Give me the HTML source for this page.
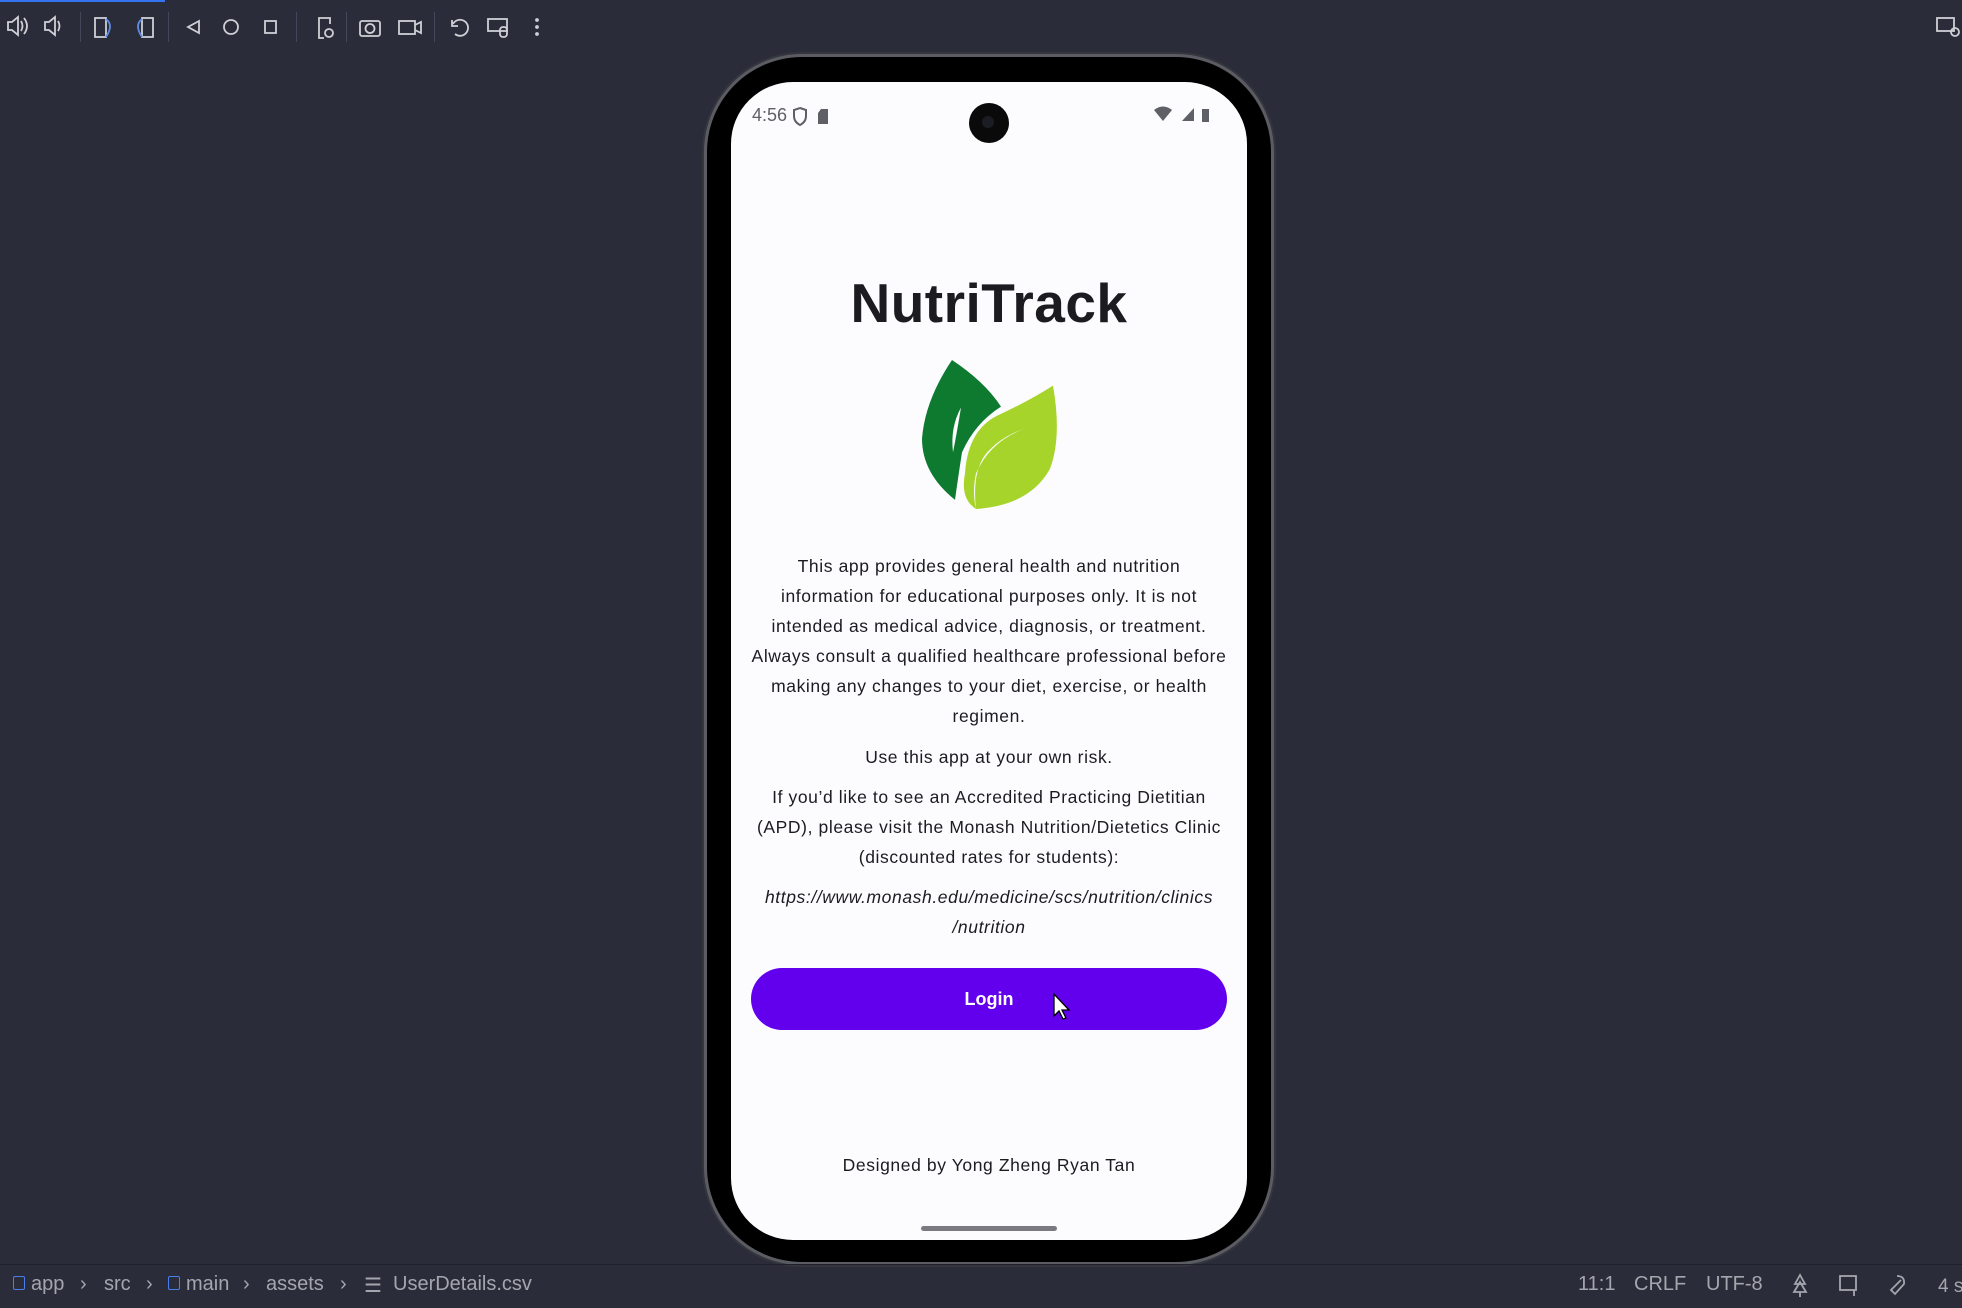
<!DOCTYPE html>
<html><head><meta charset="utf-8"><style>
html,body{margin:0;padding:0}
body{width:1962px;height:1308px;background:#2b2c39;position:relative;overflow:hidden;font-family:"Liberation Sans",sans-serif}
.abs{position:absolute}
.sep{position:absolute;top:12px;width:1px;height:30px;background:#44465a}
.t{position:absolute;left:731px;width:516px;text-align:center;color:#1c1b1f;font-size:17.5px;letter-spacing:0.6px;line-height:30px}
.b{position:absolute;top:1273px;font-size:20px;color:#a4a6ae;white-space:nowrap}
.ic{display:inline-block;width:10px;height:12px;border:1.5px solid #4a7ee8;border-radius:2px}
</style></head><body>
<div class="abs" style="left:0;top:0;width:165px;height:2px;background:#3574f0"></div>
<svg class="abs" style="left:0;top:0" width="560" height="56" fill="none" stroke="#ced0d6" stroke-width="1.8">
 <path d="M8 22h4l6-5v18l-6-5H8z"/><path d="M21 21q3 5 0 10M24 18q6 8 0 16"/>
 <path d="M45 22h4l6-5v18l-6-5h-4z"/><path d="M58 21q3 5 0 10"/>
 <rect x="95" y="18" width="11" height="19"/><path d="M106 19q8 6 0 18" stroke="#5a8be0"/>
 <rect x="142" y="18" width="11" height="19"/><path d="M142 19q-8 6 0 18" stroke="#5a8be0"/>
 <path d="M199 21l-11 6 11 6z"/><circle cx="231" cy="27" r="7"/><rect x="265" y="21" width="11" height="12"/>
 <path d="M324 38h-5V18h11v6"/><circle cx="329" cy="33" r="4"/>
 <rect x="360" y="21" width="20" height="15" rx="2"/><circle cx="370" cy="28.5" r="4.5"/>
 <rect x="399" y="21" width="16" height="13"/><path d="M415 25l6-3v11l-6-3"/>
 <path d="M452 20v6h6"/><path d="M453 24a8 8 0 1 1 2 10"/>
 <rect x="488" y="19" width="19" height="12"/><rect x="500" y="27" width="7" height="10" rx="3"/>
 <circle cx="537" cy="20" r="1" fill="#ced0d6"/><circle cx="537" cy="27" r="1" fill="#ced0d6"/><circle cx="537" cy="34" r="1" fill="#ced0d6"/>
</svg>
<div class="sep" style="left:80px"></div><div class="sep" style="left:168px"></div><div class="sep" style="left:296px"></div><div class="sep" style="left:346px"></div><div class="sep" style="left:434px"></div>
<svg class="abs" style="left:1935px;top:16px" width="27" height="22" fill="none" stroke="#ced0d6" stroke-width="1.8"><rect x="2" y="2" width="17" height="13"/><circle cx="20" cy="16" r="4"/></svg>

<!-- phone -->
<div class="abs" style="left:707px;top:57px;width:564px;height:1205px;border-radius:95px;background:#000;box-shadow:0 0 0 3px #5b5c63,0 0 0 5px #34353d"></div>
<div class="abs" style="left:731px;top:82px;width:516px;height:1158px;border-radius:62px;background:#fcfcff"></div>
<div class="abs" style="left:969px;top:103px;width:40px;height:40px;border-radius:50%;background:#0a0a0a"></div>
<div class="abs" style="left:982px;top:116px;width:12px;height:12px;border-radius:50%;background:#1c1d24"></div>
<div class="abs" style="left:752px;top:105px;font-size:18px;color:#5f5f66">4:56</div>
<svg class="abs" style="left:792px;top:106px" width="50" height="22"><path d="M8 2l6 2v6q0 6-6 9q-6-3-6-9V4z" fill="none" stroke="#5f5f66" stroke-width="2"/><path d="M29 3h7v15h-10V7z" fill="#5f5f66"/></svg>
<svg class="abs" style="left:1154px;top:106px" width="60" height="20" fill="#5f5f66"><path d="M0 4q9-7 18 0l-9 11z"/><path d="M28 15h12V2z"/><rect x="48" y="3" width="7" height="13"/></svg>

<div class="abs" style="left:731px;width:516px;top:271px;text-align:center;font-size:55px;font-weight:bold;color:#1c1b1f;letter-spacing:0.5px">NutriTrack</div>
<svg class="abs" style="left:0;top:0" width="1962" height="1308">
<g transform="translate(0,360) scale(1,0.914) translate(0,-396)">
 <path d="M952 396Q985 420 1001 447Q975 465 962 497Q958 525 955 549Q922 520 922 482Q925 440 952 396Z" fill="#0d7a30"/>
 <path d="M961 448Q950 470 953 497Q957 475 961 448Z" fill="#fcfcff"/>
 <path d="M1053 424Q1062 480 1050 515Q1030 555 976 559Q960 548 965 520Q968 470 1001 455Q1030 440 1053 424Z" fill="#a6d42a"/>
 <path d="M1025 471Q990 485 976 520Q972 540 976 559Q972 520 985 500Q1000 480 1025 471Z" fill="#fcfcff"/>
 <path d="M1001 448Q970 470 963 505Q958 530 962 550Q955 505 975 475Q985 460 1001 448Z" fill="#fcfcff"/>
</g>
</svg>

<div class="t" style="top:551px">This app provides general health and nutrition<br>information for educational purposes only. It is not<br>intended as medical advice, diagnosis, or treatment.<br>Always consult a qualified healthcare professional before<br>making any changes to your diet, exercise, or health<br>regimen.</div>
<div class="t" style="top:742px">Use this app at your own risk.</div>
<div class="t" style="top:782px">If you’d like to see an Accredited Practicing Dietitian<br>(APD), please visit the Monash Nutrition/Dietetics Clinic<br>(discounted rates for students):</div>
<div class="t" style="top:882px;font-style:italic">https://www.monash.edu/medicine/scs/nutrition/clinics<br>/nutrition</div>

<div class="abs" style="left:751px;top:968px;width:476px;height:62px;border-radius:31px;background:#6200ee;color:#fff;font-size:18px;font-weight:bold;text-align:center;line-height:62px">Login</div>
<svg class="abs" style="left:1052px;top:992px" width="22" height="30"><path d="M2 2v22l5-5 4 8 3-1-4-8h7z" fill="#fff" stroke="#000" stroke-width="1.3"/></svg>

<div class="t" style="top:1150px">Designed by Yong Zheng Ryan Tan</div>
<div class="abs" style="left:921px;top:1226px;width:136px;height:5px;border-radius:3px;background:#7a7a80"></div>

<!-- bottom bar -->
<div class="abs" style="left:0;top:1264px;width:1962px;height:1px;background:#1f2029"></div>
<div class="b" style="left:13px"><span class="ic"></span></div>
<div class="b" style="left:31px">app</div>
<div class="b" style="left:80px">›</div>
<div class="b" style="left:104px">src</div>
<div class="b" style="left:146px">›</div>
<div class="b" style="left:168px"><span class="ic"></span></div>
<div class="b" style="left:186px">main</div>
<div class="b" style="left:243px">›</div>
<div class="b" style="left:266px">assets</div>
<div class="b" style="left:340px">›</div>
<div class="b" style="left:364px">☰</div>
<div class="b" style="left:393px">UserDetails.csv</div>
<div class="b" style="left:1578px">11:1</div>
<div class="b" style="left:1634px">CRLF</div>
<div class="b" style="left:1706px">UTF-8</div>
<svg class="abs" style="left:1790px;top:1272px" width="172" height="26" fill="none" stroke="#a4a6ae" stroke-width="1.8"><path d="M10 3l-5 9h10zM10 10l-6 10h12zM10 20v5"/><rect x="50" y="4" width="16" height="14"/><path d="M64 18v6"/><path d="M107 4q8 0 7 8l-9 10-4-4 10-10" /><text x="148" y="20" fill="#a4a6ae" stroke="none" font-size="19" font-family="Liberation Sans">4 s</text></svg>
</body></html>
